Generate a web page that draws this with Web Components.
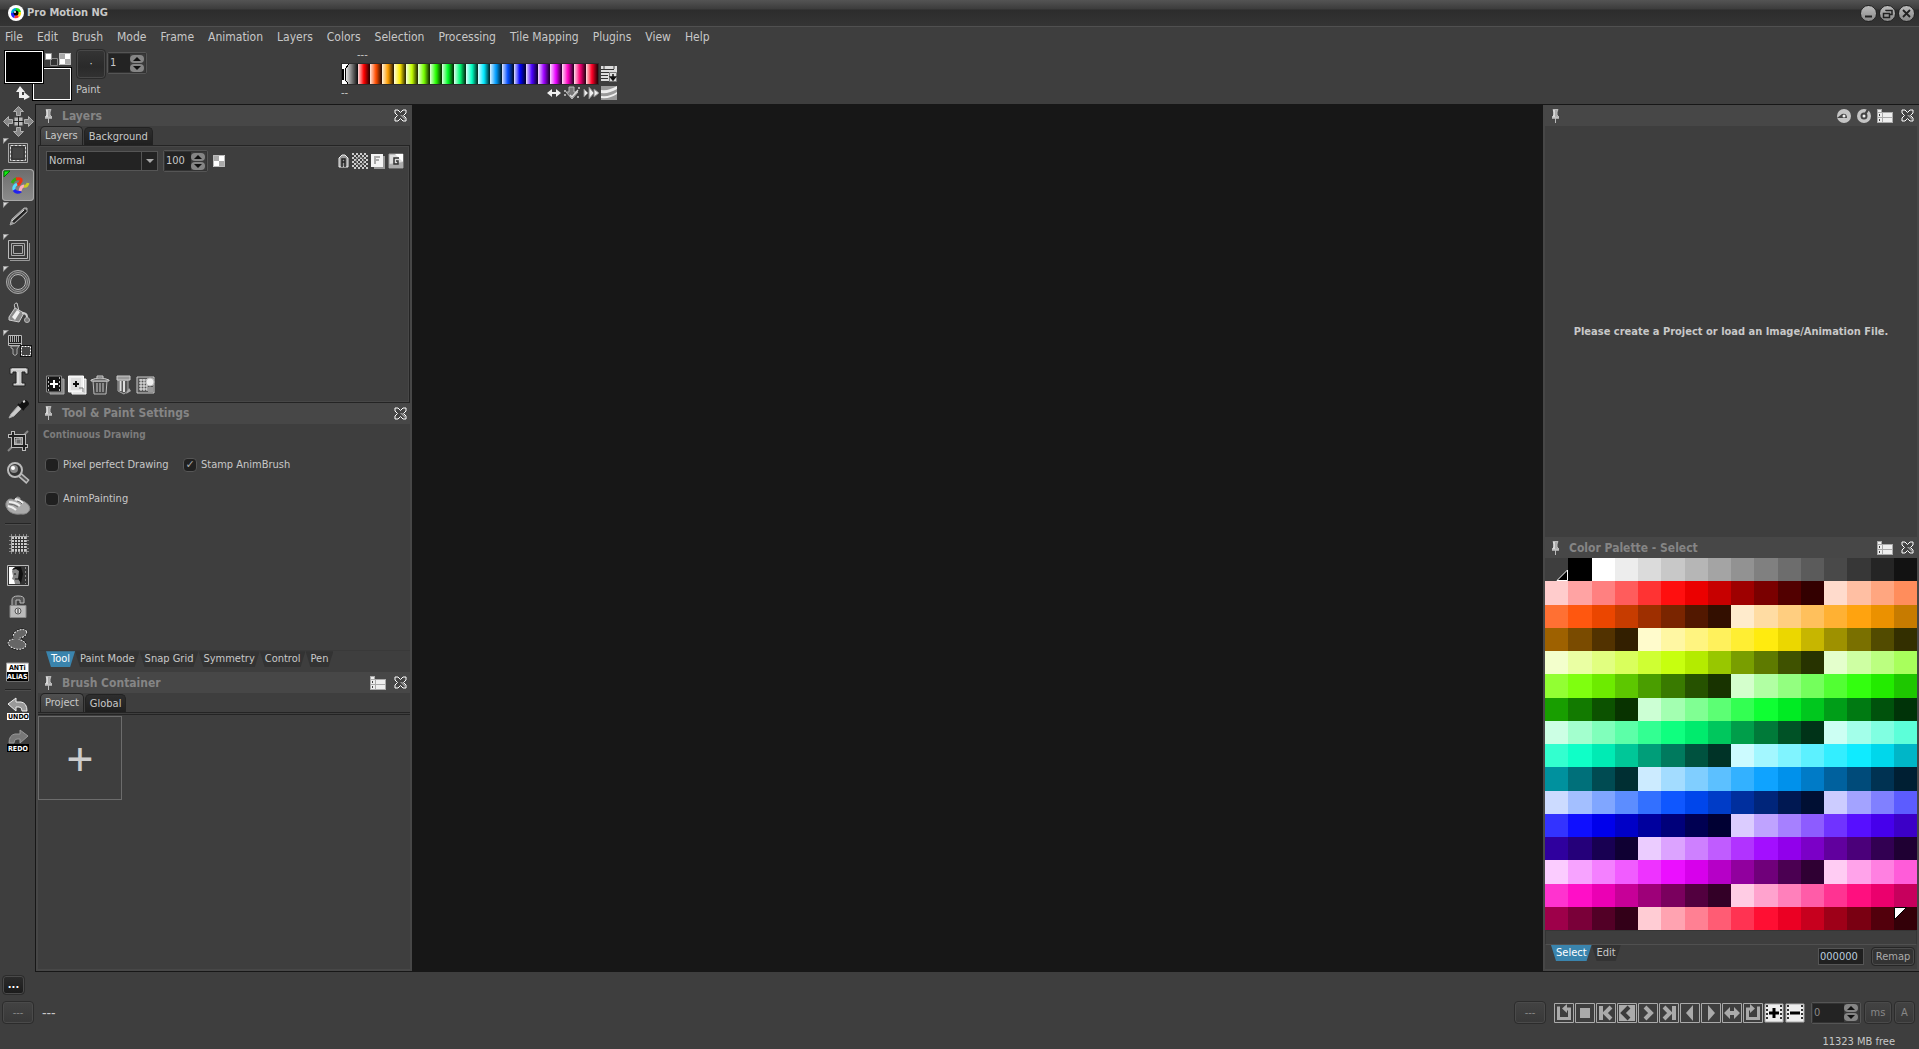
<!DOCTYPE html>
<html lang="en">
<head>
<meta charset="utf-8">
<title>Pro Motion NG</title>
<style>
  html, body {height: 100%; margin: 0}
  body {
    --bg: #3e3e3e;
    --frame: #474747;
    --line: #242424;
    --text: #c8c8c8;
    --blue: #3a84ad;
    background: var(--bg);
    color: var(--text);
    font: 11px/14px "DejaVu Sans Condensed", "Noto Sans", sans-serif;
  }
</style>
</head>
<body>

<template id="pm-app">
  <style>
    :host {display: grid; height: 100vh; grid-template-rows: auto auto auto 1fr auto; overflow: hidden}
    main {display: grid; grid-template-columns: 35px 377px 1fr 376px; min-height: 0}
    .canvas {background: #171717}
  </style>
  <pm-titlebar>Pro Motion NG</pm-titlebar>
  <pm-menu></pm-menu>
  <pm-topbar></pm-topbar>
  <main>
    <pm-toolbox></pm-toolbox>
    <pm-dock class="left">
      <pm-panel label="Layers" style="flex: 298 1 0"><pm-layers></pm-layers></pm-panel>
      <pm-panel label="Tool &amp; Paint Settings" style="flex: 270 1 0"><pm-settings></pm-settings></pm-panel>
      <pm-panel label="Brush Container" style="flex: 297 1 0">
        <pm-icon slot="tools" name="table"></pm-icon>
        <pm-brushes></pm-brushes>
      </pm-panel>
    </pm-dock>
    <section class="canvas" aria-label="Canvas"></section>
    <pm-dock>
      <pm-panel style="flex: 1 1 0">
        <pm-icon slot="tools" name="rotate"></pm-icon>
        <pm-icon slot="tools" name="dial"></pm-icon>
        <pm-icon slot="tools" name="table"></pm-icon>
        <pm-notice>Please create a Project or load an Image/Animation File.</pm-notice>
      </pm-panel>
      <pm-panel label="Color Palette - Select">
        <pm-icon slot="tools" name="table"></pm-icon>
        <pm-palette></pm-palette>
      </pm-panel>
    </pm-dock>
  </main>
  <pm-statusbar></pm-statusbar>
</template>

<template id="pm-icon">
  <style>
    :host {display: inline-flex; flex: none}
    svg {display: block}
    text {font: bold 7px "DejaVu Sans Condensed", sans-serif}
  </style>
</template>

<template id="pm-titlebar">
  <style>
    :host {
      display: flex; align-items: center; gap: 3px; height: 26px; padding: 0 4px 0 8px;
      background: linear-gradient(#545454, #3c3c3c 9px, #2c2c2c 10px, #343434);
      border-bottom: 1px solid #505050;
    }
    h1 {font: bold 11px/16px "DejaVu Sans Condensed", "Noto Sans", sans-serif; margin: 0; flex: 1}
    button {
      width: 17px; height: 17px; padding: 0; border: 1px solid #222; border-radius: 9px;
      background: linear-gradient(#bbb, #888);
    }
    .box {display: flex; gap: 2px}
  </style>
  <pm-icon name="logo"></pm-icon>
  <h1><slot></slot></h1>
  <div class="box">
    <button aria-label="Minimize"><pm-icon name="min"></pm-icon></button>
    <button aria-label="Restore"><pm-icon name="restore"></pm-icon></button>
    <button aria-label="Close"><pm-icon name="quit"></pm-icon></button>
  </div>
</template>

<template id="pm-menu">
  <style>
    :host {display: block; font-size: 12px; line-height: 20px}
    nav {display: flex; gap: 14px; padding: 0 5px}
    a {color: inherit; text-decoration: none}
    a:hover {color: #fff}
  </style>
  <nav></nav>
</template>

<template id="pm-topbar">
  <style>
    :host {display: flex; height: 57px; align-items: flex-start}
    .swatches {position: relative; width: 72px; height: 57px}
    .fg, .bg {
      position: absolute; width: 40px; height: 34px; box-sizing: border-box; padding: 0;
      border: 1px solid #000; box-shadow: inset 0 0 0 1px #fff; background: #000;
    }
    .fg {left: 4px; top: 3px}
    .bg {left: 32px; top: 20px; background: var(--bg)}
    .reset {position: absolute; left: 45px; top: 6px}
    .checker {position: absolute; left: 59px; top: 6px}
    .swap {position: absolute; left: 16px; top: 39px}
    .brush {display: grid; gap: 4px; padding: 2px 1px 2px 4px}
    .brush button {
      width: 30px; height: 30px; border: 1px solid #2a2a2a; border-radius: 4px; padding: 0;
      box-shadow: inset 0 0 0 1px #484848; background: linear-gradient(#353535, #2a2a2a 60%, #323232);
      color: #ddd; font: inherit;
    }
    .brush span {line-height: 14px}
    pm-spin {margin-top: 5px; width: 40px}
    .ramp {display: grid; grid-template-columns: auto auto; column-gap: 2px; margin-left: 194px}
    .ramp small {font-size: 11px; line-height: 16px}
    .top {padding-left: 16px; grid-column: 1 / 3}
    .under {display: flex; justify-content: space-between; height: 16px; align-items: center}
    .under div {display: flex; gap: 3px}
  </style>
  <div class="swatches">
    <button class="bg" aria-label="Second color"></button>
    <button class="fg" aria-label="First color"></button>
    <pm-icon class="reset" name="reset"></pm-icon>
    <pm-icon class="checker" name="checker"></pm-icon>
    <pm-icon class="swap" name="swap"></pm-icon>
  </div>
  <div class="brush">
    <button aria-label="Brush">·</button>
    <span>Paint</span>
  </div>
  <pm-spin label="Brush size" value="1"></pm-spin>
  <div class="ramp">
    <small class="top">---</small>
    <pm-ramp></pm-ramp>
    <pm-icon name="rampmenu"></pm-icon>
    <div class="under">
      <small>--</small>
      <div><pm-icon name="both"></pm-icon><pm-icon name="apply"></pm-icon><pm-icon name="spread"></pm-icon></div>
    </div>
    <pm-icon name="gradient"></pm-icon>
  </div>
</template>

<template id="pm-ramp">
  <style>
    :host {display: block; box-sizing: border-box; width: 258px; height: 22px; border: 1px solid #2c2c2c}
    svg {display: block}
  </style>
</template>

<template id="pm-spin">
  <style>
    :host {
      display: inline-flex; box-sizing: border-box; height: 22px; border: 1px solid #555;
      outline: 1px solid #333; outline-offset: -2px; background: #232323; border-radius: 2px;
    }
    input {
      flex: 1; min-width: 0; width: 0; border: 0; padding: 0 0 0 2px; background: none;
      color: inherit; font: inherit;
    }
    div {display: grid; align-content: center; gap: 1px; width: 16px; background: #3a3a3a}
    button {
      display: grid; place-items: center; width: 14px; height: 8px; padding: 0; border: 0;
      border-radius: 4px; background: #858585;
    }
  </style>
  <input type="text">
  <div>
    <button aria-label="Up"><pm-icon name="up"></pm-icon></button>
    <button aria-label="Down"><pm-icon name="down"></pm-icon></button>
  </div>
</template>

<template id="pm-toolbox">
  <style>
    :host {display: flex; flex-direction: column; padding: 1px 1px 0 2px}
    button {display: block; box-sizing: border-box; width: 32px; height: 32px; padding: 0; border: 0; background: none}
    button.on {
      background: linear-gradient(#6c6c6c, #8c8c8c); border-radius: 4px;
      box-shadow: inset 0 0 0 1px #a8a8a8;
    }
    hr {width: 26px; height: 0; margin: 2px 3px; border: 0; border-top: 1px solid #252525; border-bottom: 1px solid #4c4c4c}
  </style>
</template>

<template id="pm-dock">
  <style>
    :host {
      display: flex; flex-direction: column; min-height: 0; box-sizing: border-box;
      border: solid #171717; border-width: 1px 0; box-shadow: inset 0 -2px var(--frame);
      padding-bottom: 2px;
    }
    :host(.left) {border-left-width: 1px}
  </style>
  <slot></slot>
</template>

<template id="pm-panel">
  <style>
    :host {display: flex; flex-direction: column; min-height: 0; border: solid var(--frame); border-width: 0 2px}
    header {display: flex; align-items: center; height: 21px; padding: 0 3px 0 6px; background: var(--frame); gap: 8px}
    h2 {flex: 1; margin: 0; padding-left: 1px; font: bold 12px/18px "DejaVu Sans Condensed", "Noto Sans", sans-serif; color: #858585}
    .tools {display: flex; align-items: center; gap: 6px}
    .body {flex: 1; min-height: 0; display: grid}
  </style>
  <header>
    <pm-icon name="pin"></pm-icon>
    <h2></h2>
    <div class="tools"><slot name="tools"></slot></div>
    <pm-icon name="close"></pm-icon>
  </header>
  <div class="body"><slot></slot></div>
</template>

<template id="pm-tabs">
  <style>
    :host {display: flex; align-items: flex-end; height: 19px; padding-left: 2px; gap: 1px}
    button {
      height: 18px; padding: 0 4px; border: 1px solid #222; border-bottom: 0; border-radius: 5px 5px 0 0;
      background: linear-gradient(#2e2e2e, #1f1f1f); color: inherit; font: 11px/14px "DejaVu Sans Condensed", "Noto Sans", sans-serif;
    }
    button.on {height: 19px; background: linear-gradient(#505050, #3e3e3e)}
    :host(.low) {height: 16px; align-items: stretch; padding-left: 8px; gap: 0}
    :host(.low) button {
      height: 16px; border: 0; border-radius: 0; background: #333; padding: 0 5px;
      clip-path: polygon(0 0, 100% 0, calc(100% - 5px) 100%, 5px 100%);
    }
    :host(.low) button.on {background: var(--blue); color: #fff}
  </style>
</template>

<template id="pm-layers">
  <style>
    :host {display: flex; flex-direction: column}
    .page {
      flex: 1; display: flex; flex-direction: column; justify-content: space-between;
      border: 1px solid var(--line); box-shadow: inset 0 0 0 1px #474747; padding: 4px 5px 7px 7px;
    }
    .row {display: flex; align-items: center; gap: 5px; height: 22px}
    .pick {display: grid; width: 112px; height: 20px; border: 1px solid #555; box-sizing: border-box; background: #232323}
    select {
      grid-area: 1 / 1; appearance: none; border: 0; padding: 0 20px 0 2px; background: none; color: inherit;
      font: 11px/16px "DejaVu Sans Condensed", "Noto Sans", sans-serif;
    }
    .pick i {
      grid-area: 1 / 1; justify-self: end; display: grid; place-items: center; width: 15px;
      border-left: 1px solid #555; pointer-events: none;
    }
    pm-spin {width: 45px}
    .right {display: flex; align-items: center; gap: 3px; margin-left: auto}
    .low {display: flex; align-items: center; gap: 3px}
  </style>
  <pm-tabs items="Layers,Background"></pm-tabs>
  <div class="page">
    <div class="row">
      <div class="pick">
        <select aria-label="Layer mode"><option>Normal</option></select>
        <i><pm-icon name="drop"></pm-icon></i>
      </div>
      <pm-spin label="Opacity" value="100"></pm-spin>
      <pm-icon name="checker"></pm-icon>
      <div class="right">
        <pm-icon name="alpha"></pm-icon><pm-icon name="dither"></pm-icon>
        <pm-icon name="pageF"></pm-icon><pm-icon name="pageG"></pm-icon>
      </div>
    </div>
    <div class="low">
      <pm-icon name="addfilm"></pm-icon><pm-icon name="addlayer"></pm-icon><pm-icon name="trash"></pm-icon>
      <pm-icon name="merge"></pm-icon><pm-icon name="props"></pm-icon>
    </div>
  </div>
</template>

<template id="pm-settings">
  <style>
    :host {display: flex; flex-direction: column}
    h3 {margin: 4px 5px 0; font: bold 10px/14px "DejaVu Sans Condensed", "Noto Sans", sans-serif; color: #7c7c7c}
    .checks {
      display: grid; grid-template-columns: 138px 1fr; grid-auto-rows: 34px; align-items: center;
      padding: 6px 7px; flex: 1;
    }
    label {display: flex; align-items: center; gap: 4px}
    input {
      appearance: none; display: grid; place-items: center; width: 14px; height: 14px; margin: 0;
      border: 1px solid #555; border-radius: 4px; background: #202020;
    }
    input:checked::after {content: "✓"; font: 11px/12px "DejaVu Sans", sans-serif; color: #aaa}
    footer {border-top: 1px solid #393939; padding-bottom: 5px}
  </style>
  <h3>Continuous Drawing</h3>
  <div class="checks">
    <label><input type="checkbox">Pixel perfect Drawing</label>
    <label><input type="checkbox" checked>Stamp AnimBrush</label>
    <label><input type="checkbox">AnimPainting</label>
  </div>
  <footer><pm-tabs class="low" items="Tool,Paint Mode,Snap Grid,Symmetry,Control,Pen"></pm-tabs></footer>
</template>

<template id="pm-brushes">
  <style>
    :host {display: block}
    .rule {height: 1px; margin-bottom: 1px; border: solid #242424; border-width: 1px 0}
    button {
      display: block; box-sizing: border-box; width: 84px; height: 84px; padding: 0; border: 1px solid #6c6c6c;
      background: none; color: #ccc; font: 48px/82px "Noto Sans", sans-serif;
    }
  </style>
  <pm-tabs items="Project,Global"></pm-tabs>
  <div class="rule"></div>
  <button>+</button>
</template>

<template id="pm-notice">
  <style>
    :host {display: grid; place-items: center; font-weight: bold; text-align: center}
  </style>
  <p><slot></slot></p>
</template>

<template id="pm-palette">
  <style>
    :host {display: block}
    .grid {display: grid; grid-template-columns: repeat(16, 1fr); grid-auto-rows: 1fr; aspect-ratio: 1}
    .grid i {display: grid}
    .grid pm-icon {margin: auto 0 0 auto}
    .grid i:last-child pm-icon {margin: 0 auto auto 0}
    .gap {height: 13px; border: 1px solid #353535; border-bottom-color: #505050}
    .row {display: flex; align-items: flex-start; gap: 7px; height: 24px}
    pm-tabs {flex: 1; padding-left: 6px}
    input, button {box-sizing: border-box; font: inherit; color: inherit; margin: 0}
    input {width: 46px; height: 17px; margin-top: 3px; padding: 0 1px; border: 1px solid #555; background: #202020; color: #bcd}
    button {
      width: 44px; height: 19px; margin: 2px 2px 0 0; padding: 0; border: 1px solid #262626; border-radius: 4px;
      box-shadow: inset 0 0 0 1px #4c4c4c; background: #333; color: #aaa;
    }
  </style>
  <div class="grid"></div>
  <div class="gap"></div>
  <div class="row">
    <pm-tabs class="low" items="Select,Edit"></pm-tabs>
    <input type="text" value="000000" aria-label="Color code">
    <button>Remap</button>
  </div>
</template>

<template id="pm-statusbar">
  <style>
    :host {display: grid; grid-template-rows: 26px 29px 22px; padding: 0 4px 0 2px}
    .row {display: flex; align-items: center}
    button {
      box-sizing: border-box; height: 23px; padding: 0; border: 1px solid #2c2c2c; border-radius: 4px;
      box-shadow: inset 0 0 0 1px #4a4a4a; background: linear-gradient(#434343, #383838);
      color: #888; font: inherit;
    }
    .more {width: 23px; height: 20px; background: linear-gradient(#2c2c2c, #1b1b1b); color: #fff; font-weight: bold}
    .wide {width: 32px}
    .name {flex: 1; padding-left: 8px; line-height: 14px; font-size: 14px}
    .player {display: flex; gap: 1px; margin: 0 6px 0 8px}
    .player button {width: 20px; height: 20px; border: 0; border-radius: 0; box-shadow: none; background: none}
    pm-spin {width: 50px; margin-right: 3px; color: #888}
    .ms {width: 28px; margin-right: 2px}
    .a {width: 21px}
    .free {justify-content: flex-end; align-items: flex-end; padding-right: 20px}
  </style>
  <div class="row"><button class="more">...</button></div>
  <div class="row">
    <button class="wide">---</button>
    <span class="name">---</span>
    <button class="wide">---</button>
    <div class="player"></div>
    <pm-spin label="Delay" value="0"></pm-spin>
    <button class="ms">ms</button>
    <button class="a">A</button>
  </div>
  <div class="row free">11323 MB free</div>
</template>

<pm-app></pm-app>

<script>
  (function() {
    let $ = (selector, node = document) => node.querySelectorAll(selector);

    // 16 greys, then 20 hues with 12 shades each
    let shades = [90, 82, 75, 68, 60, 53, 46, 39, 31, 24, 16, 10];
    let colors = ['#3e3e3e', '#000'];
    for (let i = 0; i < 14; i++) {
      let v = Math.round(255 - 18.2 * i);
      colors.push(`rgb(${v},${v},${v})`);
    }
    for (let i = 0; i < 20; i++) {
      let hue = Math.round(i * 18.46);
      for (let l of shades) colors.push(`hsl(${hue},100%,${l}%)`);
    }

    let corner = '<path d="M1 1h6l-6 6z" fill="#999"/><path d="M2 2h3l-3 3z" fill="#ddd"/>';
    let film = '<path d="M1 1h18v18h-18z" fill="#eee" stroke="#aaa"/><path d="M3 2v16M17 2v16" stroke="#333" stroke-width="2" stroke-dasharray="2 2"/>';
    let frame = '<path d="M.5 .5h19v19h-19z" fill="none" stroke="#aaa"/>';

    // name: [width, height, markup]
    let icons = {
      logo: [16, 16, '<circle cx="8" cy="8" r="8" fill="#fff"/><path d="M8 8V3a5 5 0 0 1 5 4z" fill="#2d2"/><path d="M8 8l5-1a5 5 0 0 1-2 5z" fill="#fd0"/><path d="M8 8l3 4a5 5 0 0 1-5 1z" fill="#f33"/><path d="M8 8l-2 5a5 5 0 0 1-3-5z" fill="#22f"/><path d="M8 8H3a5 5 0 0 1 5-5z" fill="#0ad"/><circle cx="8" cy="8" r="2.500"/><circle cx="7" cy="7" r="1" fill="#fff"/>'],
      min: [15, 15, '<path d="M4 10.500h7" stroke="#222" stroke-width="2"/>'],
      restore: [15, 15, '<path d="M3.500 7.500h6v4h-6zM6 5V4.500h6v4h-2" fill="none" stroke="#222" stroke-width="1.500"/>'],
      quit: [15, 15, '<path d="M4 4l7 7M11 4l-7 7" stroke="#222" stroke-width="1.800"/>'],
      reset: [13, 13, '<path d="M5.500 5.500h7v7h-7z" fill="#333" stroke="#888"/><path d="M.5.5h6v6h-6z" fill="#fff" stroke="#999"/>'],
      checker: [12, 12, '<path d="M0 0h12v12H0z" fill="#fff"/><path d="M0 0h6v6h6v6H6V6H0z" fill="#aaa"/><path d="M.5.5h11v11H.5z" fill="none" stroke="#bbb"/>'],
      swap: [14, 14, '<path d="M4 0l5 6H6v3h2V6l6 5-6 3v-2H3V6H0z" fill="#eee"/>'],
      both: [14, 14, '<path d="M0 7l5-4v3h4V3l5 4-5 4V8H5v3z" fill="#f0f0f0"/>'],
      apply: [16, 14, '<path d="M5 1h5v5h4l-6 7-6-7h3z" fill="#777" stroke="#bbb"/><path d="M6 9l2 2 6-7" fill="none" stroke="#ddd" stroke-width="1.500"/><path d="M0 5h2M0 9h2M14 2h2M13 11h2" stroke="#aaa" stroke-width="2"/>'],
      spread: [16, 14, '<path d="M1 3l4 4-4 4zM6 1l5 6-5 6zM11 3l5 4-5 4z" fill="#eee" stroke="#888"/>'],
      rampmenu: [16, 22, '<path d="M0 3h16v15H0z" fill="#ddd"/><path d="M0 6.500h13M0 9.500h8M0 12.500h7M0 15.500h7" stroke="#333"/><path d="M3 3v3M13 3v3" stroke="#444"/><path d="M8.500 9.500h7v9h-7z" fill="#ddd" stroke="#777"/><path d="M12 11v4M9.500 14h5L12 17z" stroke="#111" stroke-width="1.500"/>'],
      gradient: [16, 16, '<path d="M0 1h16v14H0z" fill="#999"/><path d="M0 5q8 1 16-4v3Q8 9 0 8zM0 11q9 1 16-4v2q-7 5-16 4z" fill="#eee"/>'],
      up: [10, 6, '<path d="M1 5l4-4 4 4z" fill="#111"/>'],
      down: [10, 6, '<path d="M1 1l4 4 4-4z" fill="#111"/>'],
      drop: [8, 6, '<path d="M0 1h8L4 5z" fill="#aaa"/>'],
      pin: [9, 14, '<path d="M2 .5h5L6 3v3l2 2H1l2-2V3z" fill="#aaa" stroke="#bbb"/><path d="M3 1v7M1 9h7" stroke="#fff"/><path d="M4.500 9v5" stroke="#bbb"/>'],
      close: [13, 13, '<path d="M1 1h3l2.500 2.500L9 1h3v3L9.500 6.500 12 9v3H9L6.500 9.500 4 12H1V9l2.500-2.500L1 4z" fill="#444" stroke="#fff"/><path d="M6 6l5 5V9L8 6z" fill="#999"/>'],
      table: [16, 14, '<path d="M0 0h5v3h11v11H0z" fill="#aaa"/><path d="M1 1h3v2H1zM1 4h4v4H1zM1 9h4v4H1zM6 4h9v4H6zM6 9h9v4H6z" fill="#eee"/><path d="M2 6h1M2 11h1" stroke="#444" stroke-width="2"/>'],
      rotate: [14, 14, '<circle cx="7" cy="7" r="7" fill="#c4c4c4"/><path d="M0 9l5-4q5-1 5 4z" fill="#444"/><circle cx="7" cy="7" r="1.500" fill="#eee"/>'],
      dial: [14, 14, '<circle cx="7" cy="7" r="7" fill="#c4c4c4"/><circle cx="7" cy="7" r="3.500" fill="#444"/><path d="M7 5l3-5 2 1-3 5z" fill="#444"/><circle cx="7" cy="7" r="1.500" fill="#eee"/>'],
      alpha: [11, 14, '<path d="M1 13V4l3-3h3l3 3v9z" fill="#999" stroke="#eee"/><path d="M4 13V5h3v8M4 8h3" fill="none" stroke="#222" stroke-width="1.500"/>'],
      dither: [16, 16, '<path d="M0 1h16M0 5h16M0 9h16M0 13h16" stroke="#ccc" stroke-width="2" stroke-dasharray="2 2"/><path d="M0 3h16M0 7h16M0 11h16M0 15h16" stroke="#ccc" stroke-width="2" stroke-dasharray="2 2" stroke-dashoffset="2"/><circle cx="8" cy="8" r="4" fill="none" stroke="#777"/>'],
      pageF: [14, 16, '<path d="M3 3h11v13H3z" fill="#999"/><path d="M0 1h12v13H0z" fill="#f4f4f4"/><path d="M4 11V4h5M4 7h4" fill="none" stroke="#aaa" stroke-width="2"/>'],
      pageG: [16, 16, '<path d="M1 1h14v14H1z" fill="#ddd" stroke="#999"/><path d="M7 1h8v8z" fill="#fff"/><path d="M1 11l14-2v6H1z" fill="#aaa"/><path d="M11 5H6v6h4V8H8" fill="none" stroke="#333" stroke-width="1.500"/>'],
      addfilm: [19, 20, '<path d="M4 4h14v15H4z" fill="#888" stroke="#aaa"/><path d="M.5 1h15v16H.5z" fill="#151515" stroke="#888"/><path d="M2.500 2v14M13.500 2v14" stroke="#bbb" stroke-dasharray="2 2"/><path d="M8 5v8M4 9h8" stroke="#fff" stroke-width="2"/>'],
      addlayer: [19, 20, '<path d="M4 4h14v15H4z" fill="#ccc" stroke="#fff"/><path d="M.5 1h15v16H.5z" fill="#eee" stroke="#fff"/><path d="M3 3h10v12H3z" fill="#ddd"/><path d="M8 6v6M5 9h6" stroke="#111" stroke-width="2"/><path d="M11 13h4v4" fill="none" stroke="#777"/>'],
      trash: [20, 20, '<path d="M3 6h14l-1 13H4z" fill="#444" stroke="#bbb"/><path d="M7 8v9M10 8v9M13 8v9" stroke="#ccc"/><path d="M1 5q9-4 18 0v1H1zM7 3V1h6v2" fill="#666" stroke="#ccc"/>'],
      merge: [20, 20, '<path d="M5 5h10v11l-4 3-6-3z" fill="#555" stroke="#aaa"/><path d="M7.500 6v10M11 6v11" stroke="#ddd" stroke-width="2"/><path d="M4 1h13v4H4z" fill="#999" stroke="#ccc"/><path d="M13 19l5-3-2-3" fill="#aaa"/>'],
      props: [20, 20, '<path d="M1 2h17v16H1z" fill="#555" stroke="#ccc"/><path d="M3 5h8M3 8h8M3 11h8M3 14h8M5 4v12M8 4v12M11 4v12" stroke="#eee"/><circle cx="14" cy="7" r="4" fill="#eee" stroke="#bbb"/><path d="M12 12h5v5h-5z" fill="#999"/>'],
      cellA: [12, 12, '<path d="M1 11.500h10.500V1z" fill="#000" stroke="#fff"/>'],
      cellB: [14, 14, '<path d="M.5.5h12l-12 12z" fill="#fff" stroke="#000"/>'],

      move: [32, 32, '<g fill="#888" stroke="#b0b0b0"><path d="M16.500 1.500l5 5h-3v4h-4v-4h-3z"/><path d="M16.500 31.500l5-5h-3v-4h-4v4h-3z"/><path d="M1.500 16.500l5-5v3h4v4h-4v3z"/><path d="M31.500 16.500l-5-5v3h-4v4h4v3z"/></g><path d="M12 12h9v9h-9z" fill="#bbb" stroke="#444"/><path d="M16.500 11v11M11 16.500h11" stroke="#222"/>'],
      select: [32, 32, corner + '<path d="M6.500 6.500h19v19h-19z" fill="none" stroke="#aaa"/><path d="M8.500 8.500h15v15h-15z" fill="none" stroke="#ddd" stroke-dasharray="3 1"/><path d="M10 10h12v12H10z" fill="#444" stroke="#333"/>'],
      paint: [32, 32, '<path d="M2 2h6l-6 6z" fill="#1e1" stroke="#070"/><path d="M10 14q2-4 5-4" fill="none" stroke="#3a1" stroke-width="3"/><path d="M14 10q6-1 5 2t-4 4" fill="none" stroke="#e31" stroke-width="3"/><path d="M15 15q-4 2-3 6" fill="none" stroke="#5df" stroke-width="3"/><path d="M12 21q3 4 7 1" fill="none" stroke="#22e" stroke-width="3"/><path d="M18 22q1-5 4-5" fill="none" stroke="#fab" stroke-width="3"/><path d="M22 17q3 1 4-3" fill="none" stroke="#cc2" stroke-width="3"/>'],
      pen: [32, 32, corner + '<path d="M8 24l2-6L22 7h3v4L13 22z" fill="#999" stroke="#aaa"/><path d="M11 21L24 9" stroke="#222" stroke-width="3"/><path d="M10 20L22 9" stroke="#ddd"/>'],
      rects: [32, 32, corner + '<path d="M6.500 7.500h19v18h-19z" fill="#3a3a3a" stroke="#bbb"/><path d="M9.500 10.500h13v12h-13zM11.500 12.500h9v8h-9z" fill="none" stroke="#aaa"/><path d="M8 27.500h19.500V10" fill="none" stroke="#999"/>'],
      circle: [32, 32, corner + '<g fill="none"><circle cx="16" cy="17" r="10" stroke="#555" stroke-width="4"/><circle cx="16" cy="17" r="11.500" stroke="#aaa"/><circle cx="16" cy="17" r="7.500" stroke="#bbb"/><circle cx="16" cy="17" r="9.500" stroke="#999"/></g>'],
      bucket: [32, 32, '<path d="M7 20l6-9 9 5-5 9-10-2z" fill="#888" stroke="#ccc"/><path d="M10 20l5-7 3 2-5 8z" fill="#eee"/><path d="M13 11q-2-5 2-5l2 8" fill="none" stroke="#ccc"/><path d="M20 16q5 0 5 4" fill="none" stroke="#ccc" stroke-width="2"/><circle cx="25" cy="23" r="2.500" fill="#777" stroke="#bbb"/>'],
      brush: [32, 32, corner + '<path d="M6.500 6.500h13v10h-13z" fill="#222" stroke="#bbb"/><path d="M8.500 7v6M10.500 7v6M12.500 7v6M14.500 7v6M16.500 7v6M7 14.500h12" stroke="#aaa"/><path d="M9 17h8l-2 3v5q-2 3-4 0v-5l-2-1z" fill="#444" stroke="#aaa"/><path d="M18 16h12v12H18z" fill="#111"/><path d="M19.500 17.500h9v9h-9z" fill="#444" stroke="#fff" stroke-dasharray="2 1"/>'],
      type: [32, 32, '<path d="M8 7h18v6h-3v-2h-3v11h3v3H11v-3h3V11h-3v2H8z" fill="#ccc" stroke="#222"/><path d="M10 8h14M16 11v12" stroke="#eee"/>'],
      dropper: [32, 32, '<path d="M7 25l2-4 8-9 3 3-8 8z" fill="#ccc" stroke="#aaa"/><path d="M16 11l6 6M18 13l3-4q2-2 4 0t0 3l-4 4z" fill="#111" stroke="#111" stroke-width="2"/><path d="M21 9l2-1" stroke="#ddd" stroke-width="2"/>'],
      crop: [32, 32, '<path d="M6 26L26 6" stroke="#888" stroke-width="2"/><path d="M6 11h16v15M11 6v15h15" fill="none" stroke="#bbb" stroke-width="4"/><path d="M7 11h15v14M11 7v14h14" fill="none" stroke="#222" stroke-width="2"/><path d="M14 14h5v5h-5z" fill="#666" stroke="#bbb"/>'],
      zoom: [32, 32, '<path d="M18 18l8 7" stroke="#bbb" stroke-width="5"/><path d="M18 18l7 6" stroke="#555" stroke-width="2"/><circle cx="13" cy="13" r="7" fill="#333" stroke="#bbb" stroke-width="2"/><circle cx="12" cy="12" r="4" fill="#888"/><circle cx="11" cy="11" r="2" fill="#fff"/>'],
      hand: [32, 32, '<path d="M4 14q2-6 8-3l3-3q4 0 3 3l5 2q5 3 5 7-2 6-9 5-9 1-13-4-3-4-2-7z" fill="#aaa" stroke="#888"/><path d="M7 13q6 0 11 4M6 17q5 1 8 4M13 10q6 2 8 4" fill="none" stroke="#eee" stroke-width="2"/><path d="M7 15q5 0 9 3M15 12q4 1 5 3" fill="none" stroke="#666"/>'],
      grid: [32, 32, '<path d="M9.500 7v20M13.500 7v20M17.500 7v20M21.500 7v20M24.500 7v20M7 9.500h20M7 13.500h20M7 17.500h20M7 21.500h20M7 24.500h20" stroke="#888"/><path d="M9.500 9.500h15v15h-15z" fill="#ccc" stroke="#aaa"/><path d="M12.500 10v15M15.500 10v15M18.500 10v15M21.500 10v15M10 12.500h15M10 15.500h15M10 18.500h15M10 21.500h15" stroke="#333"/>'],
      face: [32, 32, '<path d="M5.500 6.500h21v20h-21z" fill="#333" stroke="#bbb"/><path d="M7 8h7v17H7z" fill="#fff"/><path d="M10 12q3-6 8-4v17h-5l-1-4-2-1 1-3z" fill="#888"/><path d="M10 11q3-5 9-3l2 7-2 9-3-4 1-8-3-2z" fill="#111"/><path d="M12 15h2M13 20h3" stroke="#111"/><path d="M23.500 8v17" stroke="#888" stroke-dasharray="2 2"/>'],
      lock: [32, 32, '<path d="M10 15V9q0-4 6-4t6 3v4h-4V9h-4v6z" fill="#555" stroke="#bbb"/><path d="M8 14.500h16v12H8z" fill="#bbb" stroke="#888"/><circle cx="16" cy="20" r="3" fill="#ddd" stroke="#555"/><path d="M16 18v4" stroke="#222"/>'],
      lasso: [32, 32, '<g fill="#666" stroke="#111" stroke-width="2"><ellipse cx="18" cy="11" rx="7" ry="4" transform="rotate(-20 18 11)"/><ellipse cx="15" cy="21" rx="9" ry="5" transform="rotate(10 15 21)"/></g><g fill="#666" stroke="#eee" stroke-dasharray="2 1"><ellipse cx="18" cy="11" rx="7" ry="4" transform="rotate(-20 18 11)"/><ellipse cx="15" cy="21" rx="9" ry="5" transform="rotate(10 15 21)"/></g><path d="M13 13l3 4" stroke="#666" stroke-width="5"/>'],
      anti: [32, 32, '<path d="M4.500 8h22v18h-22z" fill="#fff" stroke="#999"/><path d="M5 17h21v9H5z"/><text x="7" y="15">ANTi</text><text x="5" y="24" fill="#fff">ALiAS</text>'],
      undo: [32, 32, '<path d="M6 11l8-6v4h5q6 1 6 9h-5q0-4-3-4h-3v4z" fill="#999" stroke="#eee"/><path d="M5 20h22v7H5z" fill="#fff"/><text x="6" y="26">UNDO</text>'],
      redo: [32, 32, '<path d="M26 11l-8-6v4h-5q-6 1-6 9h5q0-4 3-4h3v4z" fill="#777" stroke="#999"/><path d="M5 19h22v8H5z"/><text x="6" y="26" fill="#fff">REDO</text>'],

      loopback: [20, 20, frame + '<path d="M6 5H4.500v10.500h11V6H13" fill="none" stroke="#aaa" stroke-width="3"/><path d="M13 1v9L8 5.500z" fill="#aaa"/>'],
      stop: [20, 20, frame + '<path d="M5 5h10v10H5z" fill="#aaa"/>'],
      first: [20, 20, frame + '<path d="M3 3h4v14H3z" fill="#aaa"/><path d="M15 4l-6 6 6 6" fill="none" stroke="#aaa" stroke-width="4"/>'],
      prev: [20, 20, frame + '<path d="M2 2h16v16H2z" fill="#aaa"/><path d="M12 4l-6 6 6 6" fill="none" stroke="#3a3a3a" stroke-width="4"/>'],
      next: [20, 20, frame + '<path d="M7 4l6 6-6 6" fill="none" stroke="#aaa" stroke-width="4"/>'],
      last: [20, 20, frame + '<path d="M13 3h4v14h-4z" fill="#aaa"/><path d="M5 4l6 6-6 6" fill="none" stroke="#aaa" stroke-width="4"/>'],
      back: [20, 20, frame + '<path d="M13 2v16L6 10z" fill="#aaa"/>'],
      play: [20, 20, frame + '<path d="M7 2v16l7-8z" fill="#aaa"/>'],
      pingpong: [20, 20, frame + '<path d="M2 10l6-6v4h4V4l6 6-6 6v-4H8v4z" fill="#aaa"/>'],
      loop: [20, 20, frame + '<path d="M7 6H4.500v9.500h11V5H14" fill="none" stroke="#aaa" stroke-width="3"/><path d="M7 1v9l5-4.500z" fill="#aaa"/>'],
      addframe: [20, 20, film + '<path d="M10 5v10M5 10h10" stroke="#000" stroke-width="3"/>'],
      delframe: [20, 20, film + '<path d="M5 10h10" stroke="#000" stroke-width="3"/>']
    };

    let tools = [
      'move', 'select', 'paint', 'pen', 'rects', 'circle', 'bucket', 'brush', 'type', 'dropper', 'crop', 'zoom', 'hand', '',
      'grid', 'face', 'lock', 'lasso', 'anti', '', 'undo', 'redo'
    ];
    let menu = ['File', 'Edit', 'Brush', 'Mode', 'Frame', 'Animation', 'Layers', 'Colors', 'Selection', 'Processing', 'Tile Mapping', 'Plugins', 'View', 'Help'];
    let player = ['loopback', 'stop', 'first', 'prev', 'next', 'last', 'back', 'play', 'pingpong', 'loop', 'addframe', 'delframe'];

    // each element clones the template that has its own tag as id
    class PmElement extends HTMLElement {
      constructor() {
        super();
        let content = $(`#${this.localName}`)[0].content.cloneNode(true);
        this.attachShadow({mode: 'open'}).append(content);
      }
      add(html, selector) {
        let node = selector ? $(selector, this.shadowRoot)[0] : this.shadowRoot;
        let part = document.createElement('template');
        part.innerHTML = html;
        node.append(part.content);
      }
    }

    class Icon extends PmElement {
      connectedCallback() {
        let [w, h, markup] = icons[this.getAttribute('name')];
        this.add(`<svg width="${w}" height="${h}" viewBox="0 0 ${w} ${h}" aria-hidden="true">${markup}</svg>`);
      }
    }

    class Menu extends PmElement {
      connectedCallback() {
        this.add(menu.map(name => `<a href="#">${name}</a>`).join(''), 'nav');
      }
    }

    class Ramp extends PmElement {
      connectedCallback() {
        // one pixel column per palette entry, with the cursor at the first
        let bars = colors.map((c, i) => `<rect x="${i}" width="1" height="20" fill="${c}"/>`).join('');
        this.add(`<svg width="256" height="20" shape-rendering="crispEdges">${bars}<path d="M0 0h6l-4 5v10l3 5H0z" fill="#fff"/><path d="M7 0L3 5v10l3 5M0 5h1v10H0z" stroke="#000" fill="none"/></svg>`);
      }
    }

    class Spin extends PmElement {
      connectedCallback() {
        let input = $('input', this.shadowRoot)[0];
        input.value = this.getAttribute('value');
        input.setAttribute('aria-label', this.getAttribute('label'));
      }
    }

    class Toolbox extends PmElement {
      connectedCallback() {
        this.add(tools.map(name => name
          ? `<button aria-label="${name}"${name == 'paint' ? ' class="on"' : ''}><pm-icon name="${name}"></pm-icon></button>`
          : '<hr>').join(''));
      }
    }

    class Panel extends PmElement {
      connectedCallback() {
        $('h2', this.shadowRoot)[0].textContent = this.getAttribute('label') || '';
      }
    }

    class Tabs extends PmElement {
      connectedCallback() {
        let items = this.getAttribute('items').split(',');
        this.add(items.map((name, i) => `<button${i ? '' : ' class="on"'}>${name}</button>`).join(''));
        this.shadowRoot.addEventListener('click', e => {
          if (e.target.localName != 'button') return;
          for (let tab of $('button', this.shadowRoot)) tab.classList.toggle('on', tab == e.target);
        });
      }
    }

    class Palette extends PmElement {
      connectedCallback() {
        this.add(colors.map((c, i) => {
          let mark = i == 0 ? '<pm-icon name="cellA"></pm-icon>' : i == 255 ? '<pm-icon name="cellB"></pm-icon>' : '';
          return `<i style="background: ${c}">${mark}</i>`;
        }).join(''), '.grid');
      }
    }

    class Statusbar extends PmElement {
      connectedCallback() {
        this.add(player.map(name => `<button aria-label="${name}"><pm-icon name="${name}"></pm-icon></button>`).join(''), '.player');
      }
    }

    customElements.define('pm-icon', Icon);
    customElements.define('pm-menu', Menu);
    customElements.define('pm-ramp', Ramp);
    customElements.define('pm-spin', Spin);
    customElements.define('pm-toolbox', Toolbox);
    customElements.define('pm-panel', Panel);
    customElements.define('pm-tabs', Tabs);
    customElements.define('pm-palette', Palette);
    customElements.define('pm-statusbar', Statusbar);
    for (let tag of ['titlebar', 'topbar', 'dock', 'layers', 'settings', 'brushes', 'notice', 'app']) {
      customElements.define(`pm-${tag}`, class extends PmElement {});
    }
  })();
</script>
</body>
</html>
